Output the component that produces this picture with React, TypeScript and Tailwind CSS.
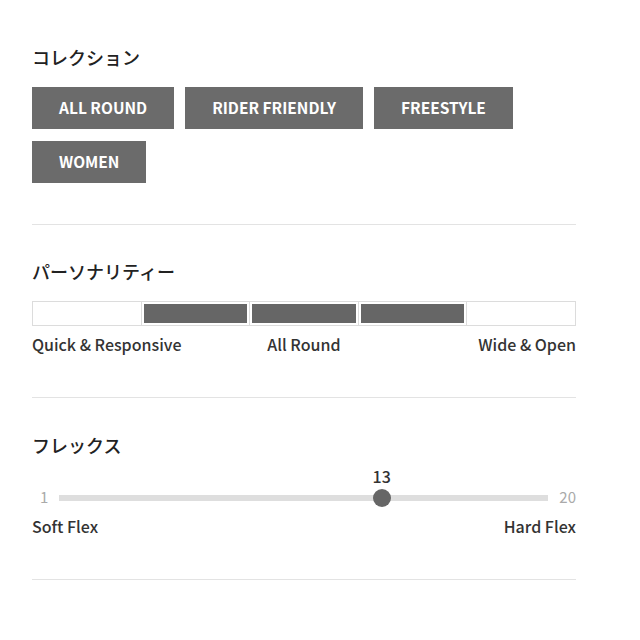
const collections = ["ALL ROUND", "RIDER FRIENDLY", "FREESTYLE", "WOMEN"];
const personality = [false, true, true, true, false];

const flexMin = 1;
const flexMax = 20;
const flexValue = 13;

export default function App() {
    const thumbPercent = 66;
    return (
        <div
            className="w-[640px] h-[640px] bg-white px-[32px] pt-[44px] text-[#222]"
            style={{ fontFamily: '"Noto Sans CJK JP", "Noto Sans", sans-serif' }}
        >
            <div className="w-[544px]">
                <section className="border-b border-[#e3e3e3] pb-[41px]">
                    <h2 className="text-[18px] leading-[26px] font-medium">コレクション</h2>
                    <div className="mt-[17px] flex flex-wrap gap-x-[11px] gap-y-[12px]">
                        {collections.map((c) => (
                            <button
                                key={c}
                                type="button"
                                className="h-[42px] bg-[#6b6b6b] px-[27px] text-[15.5px] font-bold text-white"
                            >
                                {c}
                            </button>
                        ))}
                    </div>
                </section>

                <section className="border-b border-[#e3e3e3] pt-[33px] pb-[42px]">
                    <h2 className="text-[18px] leading-[26px] font-medium">パーソナリティー</h2>
                    <div className="mt-[17px] flex h-[25px] border border-[#dcdcdc]">
                        {personality.map((on, i) => (
                            <div
                                key={i}
                                className={`flex-1 p-[2px] ${i < personality.length - 1 ? "border-r border-[#dcdcdc]" : ""}`}
                            >
                                {on ? <div className="h-full bg-[#666]" /> : null}
                            </div>
                        ))}
                    </div>
                    <div className="mt-[7px] flex justify-between text-[16px] leading-[22px] font-medium text-[#333]">
                        <span>Quick &amp; Responsive</span>
                        <span className="pr-[52px]">All Round</span>
                        <span>Wide &amp; Open</span>
                    </div>
                </section>

                <section className="border-b border-[#e3e3e3] pt-[34px] pb-[42px]">
                    <h2 className="text-[18px] leading-[26px] font-medium">フレックス</h2>
                    <div className="mt-[8px] flex items-center">
                        <span className="w-[27px] pl-[8px] text-[15px] text-[#aaa] self-end leading-[20px] mb-[-1px]">{flexMin}</span>
                        <div className="relative flex-1 h-[40px]">
                            <span
                                className="absolute top-0 -translate-x-1/2 text-[16px] leading-[20px] font-medium text-[#333]"
                                style={{ left: `${thumbPercent}%` }}
                            >
                                {flexValue}
                            </span>
                            <div className="absolute left-0 right-0 top-[29px] h-[6px] bg-[#dedede]" />
                            <div
                                className="absolute top-[23px] h-[18px] w-[18px] -translate-x-1/2 rounded-full bg-[#666]"
                                style={{ left: `${thumbPercent}%` }}
                            />
                        </div>
                        <span className="w-[28px] text-right text-[15px] text-[#aaa] self-end leading-[20px] mb-[-1px]">{flexMax}</span>
                    </div>
                    <div className="mt-[9px] flex justify-between text-[16px] leading-[22px] font-medium text-[#333]">
                        <span>Soft Flex</span>
                        <span>Hard Flex</span>
                    </div>
                </section>
            </div>
        </div>
    );
}
